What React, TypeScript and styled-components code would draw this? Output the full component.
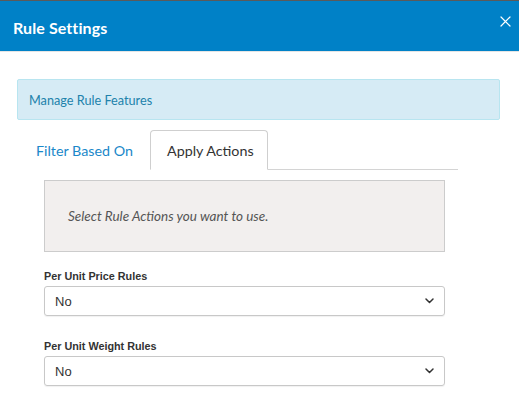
import styled, { createGlobalStyle } from 'styled-components';

const GlobalStyle = createGlobalStyle`
  html, body {
    margin: 0;
    padding: 0;
    background: #fff;
    overflow: hidden;
  }
  body {
    font-family: Lato, "Open Sans", sans-serif;
  }
  * {
    box-sizing: border-box;
  }
`;

const fields = [
  { label: 'Per Unit Price Rules', value: 'No' },
  { label: 'Per Unit Weight Rules', value: 'No' },
  { label: 'Product Listing Shipping Fee Rules', value: 'No' },
];

const Chevron = () => (
  <svg width={9} height={6} viewBox="0 0 9 6" fill="none">
    <path d="M1 1l3.5 3.5L8 1" stroke="#333" strokeWidth={1.5} strokeLinecap="round" strokeLinejoin="round" />
  </svg>
);

const CloseIcon = () => (
  <svg width={11} height={11} viewBox="0 0 11 11" fill="none">
    <path d="M1 1l9 9M10 1l-9 9" stroke="#fff" strokeWidth={1.2} strokeLinecap="round" />
  </svg>
);

export default function App() {
  return (
    <>
      <GlobalStyle />
      <Modal>
        <Header>
          <Title>Rule Settings</Title>
          <CloseButton aria-label="close">
            <CloseIcon />
          </CloseButton>
        </Header>
        <Body>
          <Alert>Manage Rule Features</Alert>
          <TabList>
            <Tab>Filter Based On</Tab>
            <Tab active>Apply Actions</Tab>
          </TabList>
          <Panel>
            <Note>Select Rule Actions you want to use.</Note>
            {fields.map((f) => (
              <Field key={f.label}>
                <Label>{f.label}</Label>
                <Select>
                  <span>{f.value}</span>
                  <Chevron />
                </Select>
              </Field>
            ))}
          </Panel>
        </Body>
      </Modal>
    </>
  );
}

const Modal = styled.div`
  width: 519px;
  height: 410px;
  overflow: hidden;
  border-top: 1px solid #5a5a5a;
  background: #fff;
`;

const Header = styled.header`
  height: 51px;
  background: #0081c7;
  border-bottom: 1px solid #e5e5e5;
  display: flex;
  align-items: center;
  justify-content: space-between;
  padding: 2px 8px 0 13px;
`;

const Title = styled.h1`
  margin: 0;
  color: #fff;
  font-size: 16px;
  font-weight: 700;
  letter-spacing: 0.1px;
`;

const CloseButton = styled.button`
  border: 0;
  background: none;
  padding: 0;
  display: flex;
  align-self: flex-start;
  margin-top: 13px;
`;

const Body = styled.div`
  padding: 27px 19px 0 17px;
`;

const Alert = styled.div`
  height: 41px;
  display: flex;
  align-items: center;
  padding: 0 11px;
  background: #d6ebf5;
  border: 1px solid #b8e5f0;
  border-radius: 2px;
  color: #2182ab;
  font-size: 12.7px;
`;

const TabList = styled.div`
  width: 441px;
  margin-top: 10px;
  display: flex;
  border-bottom: 1px solid #d4d4d4;
`;

const Tab = styled.div<{ active?: boolean }>`
  height: 40px;
  margin-bottom: -1px;
  padding: ${({ active }) => (active ? '0 13px 0 16px' : '0 16px 0 18px')};
  display: flex;
  align-items: center;
  font-size: 14.3px;
  color: ${({ active }) => (active ? '#333' : '#1a88c9')};
  background: #fff;
  border: 1px solid ${({ active }) => (active ? '#cfcfcf' : 'transparent')};
  border-bottom-color: ${({ active }) => (active ? '#fff' : 'transparent')};
  border-radius: 4px 4px 0 0;
`;

const Panel = styled.div`
  width: 428px;
  padding: 10px 0 0 27px;
`;

const Note = styled.div`
  height: 72px;
  display: flex;
  align-items: center;
  padding: 0 23px;
  background: #f2efee;
  border: 1px solid #cccccc;
  font-style: italic;
  font-size: 13.5px;
  color: #555;
`;

const Field = styled.div`
  margin-top: 18px;
  & + & {
    margin-top: 24px;
  }
`;

const Label = styled.div`
  font-family: "Liberation Sans", Arial, sans-serif;
  font-weight: 700;
  font-size: 10.8px;
  color: #333;
  margin-bottom: 4px;
`;

const Select = styled.div`
  height: 30px;
  display: flex;
  align-items: center;
  justify-content: space-between;
  padding: 0 10px 0 10px;
  border: 1px solid #c8c8c8;
  border-radius: 3px;
  box-shadow: 0 1px 1px rgba(0, 0, 0, 0.06);
  font-family: "Liberation Sans", Arial, sans-serif;
  font-size: 13px;
  color: #333;
`;
